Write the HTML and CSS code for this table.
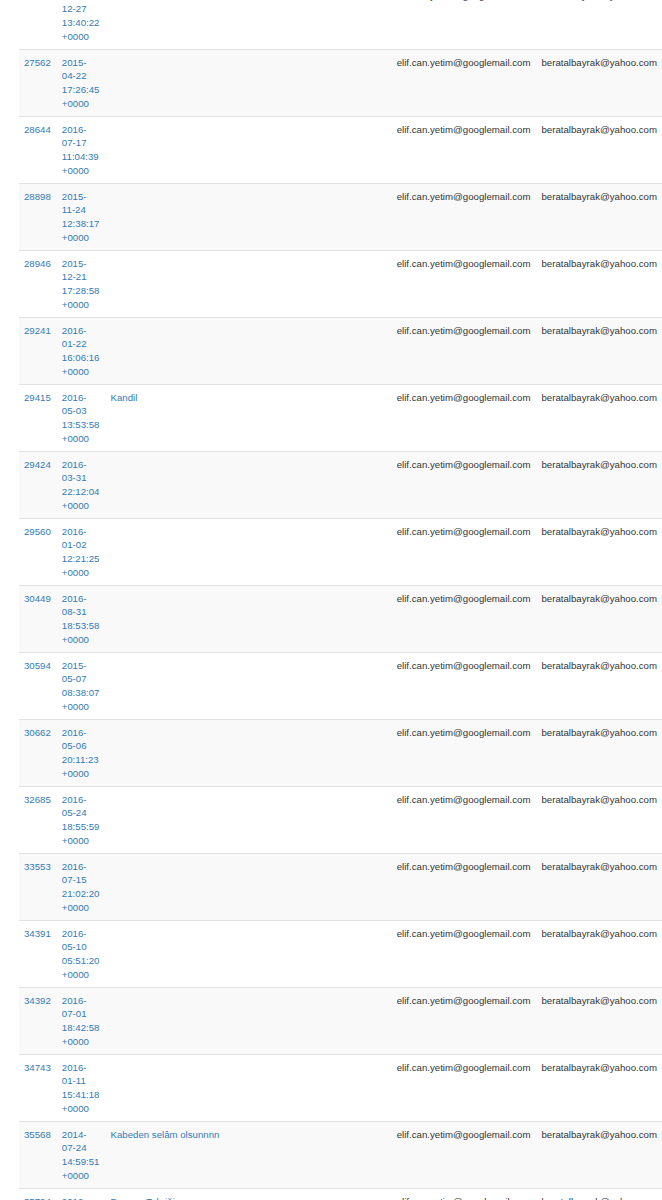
FILE: index.html
```html
<!DOCTYPE html>
<html lang="tr">
<head>
<meta charset="utf-8">
<title>Mails</title>
<link rel="stylesheet" href="styles.css">
</head>
<body>
<div class="page">
<table class="mails">
<tbody>
<tr><td class="id"><a href="#">27001</a></td><td class="date"><a href="#">2015-12-27 13:40:22 +0000</a></td><td class="subject"></td><td class="mail">elif.can.yetim@googlemail.com</td><td class="mail">beratalbayrak@yahoo.com</td></tr>
<tr><td class="id"><a href="#">27562</a></td><td class="date"><a href="#">2015-04-22 17:26:45 +0000</a></td><td class="subject"></td><td class="mail">elif.can.yetim@googlemail.com</td><td class="mail">beratalbayrak@yahoo.com</td></tr>
<tr><td class="id"><a href="#">28644</a></td><td class="date"><a href="#">2016-07-17 11:04:39 +0000</a></td><td class="subject"></td><td class="mail">elif.can.yetim@googlemail.com</td><td class="mail">beratalbayrak@yahoo.com</td></tr>
<tr><td class="id"><a href="#">28898</a></td><td class="date"><a href="#">2015-11-24 12:38:17 +0000</a></td><td class="subject"></td><td class="mail">elif.can.yetim@googlemail.com</td><td class="mail">beratalbayrak@yahoo.com</td></tr>
<tr><td class="id"><a href="#">28946</a></td><td class="date"><a href="#">2015-12-21 17:28:58 +0000</a></td><td class="subject"></td><td class="mail">elif.can.yetim@googlemail.com</td><td class="mail">beratalbayrak@yahoo.com</td></tr>
<tr><td class="id"><a href="#">29241</a></td><td class="date"><a href="#">2016-01-22 16:06:16 +0000</a></td><td class="subject"></td><td class="mail">elif.can.yetim@googlemail.com</td><td class="mail">beratalbayrak@yahoo.com</td></tr>
<tr><td class="id"><a href="#">29415</a></td><td class="date"><a href="#">2016-05-03 13:53:58 +0000</a></td><td class="subject"><a href="#">Kandil</a></td><td class="mail">elif.can.yetim@googlemail.com</td><td class="mail">beratalbayrak@yahoo.com</td></tr>
<tr><td class="id"><a href="#">29424</a></td><td class="date"><a href="#">2016-03-31 22:12:04 +0000</a></td><td class="subject"></td><td class="mail">elif.can.yetim@googlemail.com</td><td class="mail">beratalbayrak@yahoo.com</td></tr>
<tr><td class="id"><a href="#">29560</a></td><td class="date"><a href="#">2016-01-02 12:21:25 +0000</a></td><td class="subject"></td><td class="mail">elif.can.yetim@googlemail.com</td><td class="mail">beratalbayrak@yahoo.com</td></tr>
<tr><td class="id"><a href="#">30449</a></td><td class="date"><a href="#">2016-08-31 18:53:58 +0000</a></td><td class="subject"></td><td class="mail">elif.can.yetim@googlemail.com</td><td class="mail">beratalbayrak@yahoo.com</td></tr>
<tr><td class="id"><a href="#">30594</a></td><td class="date"><a href="#">2015-05-07 08:38:07 +0000</a></td><td class="subject"></td><td class="mail">elif.can.yetim@googlemail.com</td><td class="mail">beratalbayrak@yahoo.com</td></tr>
<tr><td class="id"><a href="#">30662</a></td><td class="date"><a href="#">2016-05-06 20:11:23 +0000</a></td><td class="subject"></td><td class="mail">elif.can.yetim@googlemail.com</td><td class="mail">beratalbayrak@yahoo.com</td></tr>
<tr><td class="id"><a href="#">32685</a></td><td class="date"><a href="#">2016-05-24 18:55:59 +0000</a></td><td class="subject"></td><td class="mail">elif.can.yetim@googlemail.com</td><td class="mail">beratalbayrak@yahoo.com</td></tr>
<tr><td class="id"><a href="#">33553</a></td><td class="date"><a href="#">2016-07-15 21:02:20 +0000</a></td><td class="subject"></td><td class="mail">elif.can.yetim@googlemail.com</td><td class="mail">beratalbayrak@yahoo.com</td></tr>
<tr><td class="id"><a href="#">34391</a></td><td class="date"><a href="#">2016-05-10 05:51:20 +0000</a></td><td class="subject"></td><td class="mail">elif.can.yetim@googlemail.com</td><td class="mail">beratalbayrak@yahoo.com</td></tr>
<tr><td class="id"><a href="#">34392</a></td><td class="date"><a href="#">2016-07-01 18:42:58 +0000</a></td><td class="subject"></td><td class="mail">elif.can.yetim@googlemail.com</td><td class="mail">beratalbayrak@yahoo.com</td></tr>
<tr><td class="id"><a href="#">34743</a></td><td class="date"><a href="#">2016-01-11 15:41:18 +0000</a></td><td class="subject"></td><td class="mail">elif.can.yetim@googlemail.com</td><td class="mail">beratalbayrak@yahoo.com</td></tr>
<tr><td class="id"><a href="#">35568</a></td><td class="date"><a href="#">2014-07-24 14:59:51 +0000</a></td><td class="subject"><a href="#">Kabeden selâm olsunnnn</a></td><td class="mail">elif.can.yetim@googlemail.com</td><td class="mail">beratalbayrak@yahoo.com</td></tr>
<tr><td class="id"><a href="#">35794</a></td><td class="date"><a href="#">2012-10-25 09:14:32 +0000</a></td><td class="subject"><a href="#">Bayram Tebriği</a></td><td class="mail">elif.can.yetim@googlemail.com</td><td class="mail">beratalbayrak@yahoo.com</td></tr>
</tbody>
</table>
</div>
</body>
</html>
```

FILE: styles.css
```css
html {
  overflow: hidden;
  background: #fff;
}
body {
  margin: 0;
  font-family: "Liberation Sans", Arial, Helvetica, sans-serif;
  font-size: 9.66px;
  line-height: 13.75px;
  color: #333;
}
.page {
  margin-top: -18px;
  padding-left: 18.5px;
}
.mails {
  width: 644px;
  border-collapse: collapse;
  border-spacing: 0;
}
.mails td {
  padding: 5.5px;
  border-top: 1px solid #e2e2e2;
  vertical-align: top;
  text-align: left;
}
.mails tr:nth-child(even) td {
  background: #f9f9f9;
}
.mails a {
  color: #337ab7;
  text-decoration: none;
}
.id {
  width: 1px;
  white-space: nowrap;
}
.date {
  width: 1px;
}
.mail {
  width: 1px;
  white-space: nowrap;
}
```
